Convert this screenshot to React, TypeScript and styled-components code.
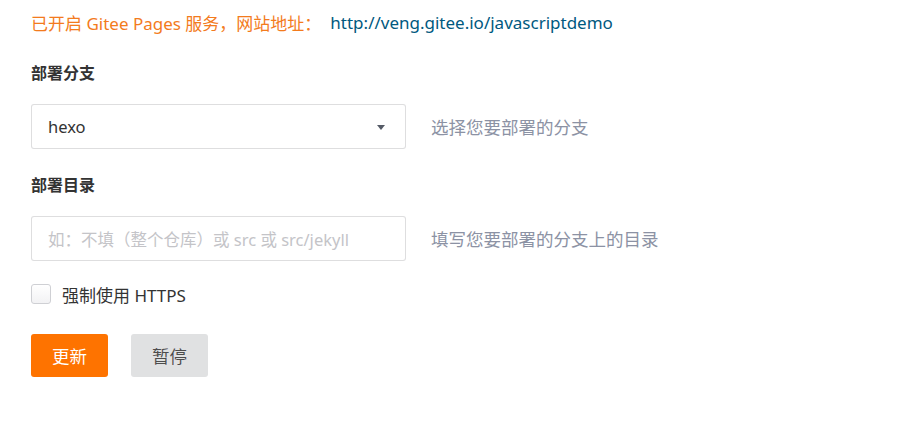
import React from "react";
import styled, { createGlobalStyle } from "styled-components";

const GlobalStyle = createGlobalStyle`
  html, body { margin: 0; padding: 0; background: #ffffff; }
  body {
    font-family: "Noto Sans", "Noto Sans CJK SC", sans-serif;
    color: #333333;
  }
  * { box-sizing: border-box; }
`;

const Page = styled.div`
  padding: 0 31px;
  width: 916px;
  height: 433px;
`;

const StatusLine = styled.div`
  height: 44px;
  display: flex;
  align-items: center;
  font-size: 17px;
  gap: 9px;
`;

const StatusText = styled.span`
  color: #f37b1d;
`;

const SiteLink = styled.a`
  color: #005980;
  text-decoration: none;
`;

const FieldLabel = styled.div<{ $top: number }>`
  margin-top: ${(p) => p.$top}px;
  height: 20px;
  line-height: 20px;
  font-size: 16px;
  font-weight: 700;
  color: #333333;
`;

const FieldRow = styled.div`
  margin-top: 21px;
  display: flex;
  align-items: center;
  gap: 25px;
`;

const Box = styled.div`
  width: 375px;
  height: 45px;
  border: 1px solid rgba(34, 36, 38, 0.15);
  border-radius: 3px;
  display: flex;
  align-items: center;
  justify-content: space-between;
  padding: 0 20px 0 16px;
  font-size: 16.5px;
  background: #ffffff;
`;

const SelectValue = styled.span`
  color: #333333;
`;

const Caret = styled.span`
  width: 0;
  height: 0;
  border-left: 4.5px solid transparent;
  border-right: 4.5px solid transparent;
  border-top: 5px solid #555a66;
  margin-top: 2px;
`;

const Placeholder = styled.span`
  color: #c4c4c8;
`;

const HelpText = styled.span`
  font-size: 17.5px;
  color: #8c92a4;
`;

const CheckRow = styled.label`
  margin-top: 22px;
  display: flex;
  align-items: center;
  gap: 11px;
  height: 22px;
  font-size: 17px;
  color: #333333;
`;

const CheckBox = styled.span`
  width: 20px;
  height: 20px;
  border: 1px solid #cfd0d4;
  border-radius: 3px;
  background: linear-gradient(#ffffff, #f2f2f4);
`;

const Buttons = styled.div`
  margin-top: 29px;
  display: flex;
  gap: 23px;
`;

const Button = styled.button<{ $primary?: boolean }>`
  width: 77px;
  height: 43px;
  border: none;
  border-radius: 3px;
  font-family: inherit;
  font-size: 17.5px;
  background: ${(p) => (p.$primary ? "#fe7300" : "#e0e1e2")};
  color: ${(p) => (p.$primary ? "#ffffff" : "rgba(0,0,0,0.68)")};
  padding: 0;
`;

export default function App() {
  return (
    <>
      <GlobalStyle />
      <Page>
        <StatusLine>
          <StatusText>已开启 Gitee Pages 服务，网站地址：</StatusText>
          <SiteLink href="#">http://veng.gitee.io/javascriptdemo</SiteLink>
        </StatusLine>
        <FieldLabel $top={19}>部署分支</FieldLabel>
        <FieldRow>
          <Box>
            <SelectValue>hexo</SelectValue>
            <Caret />
          </Box>
          <HelpText>选择您要部署的分支</HelpText>
        </FieldRow>
        <FieldLabel $top={26}>部署目录</FieldLabel>
        <FieldRow>
          <Box>
            <Placeholder>如：不填（整个仓库）或 src 或 src/jekyll</Placeholder>
          </Box>
          <HelpText>填写您要部署的分支上的目录</HelpText>
        </FieldRow>
        <CheckRow>
          <CheckBox />
          强制使用 HTTPS
        </CheckRow>
        <Buttons>
          <Button $primary>更新</Button>
          <Button>暂停</Button>
        </Buttons>
      </Page>
    </>
  );
}
